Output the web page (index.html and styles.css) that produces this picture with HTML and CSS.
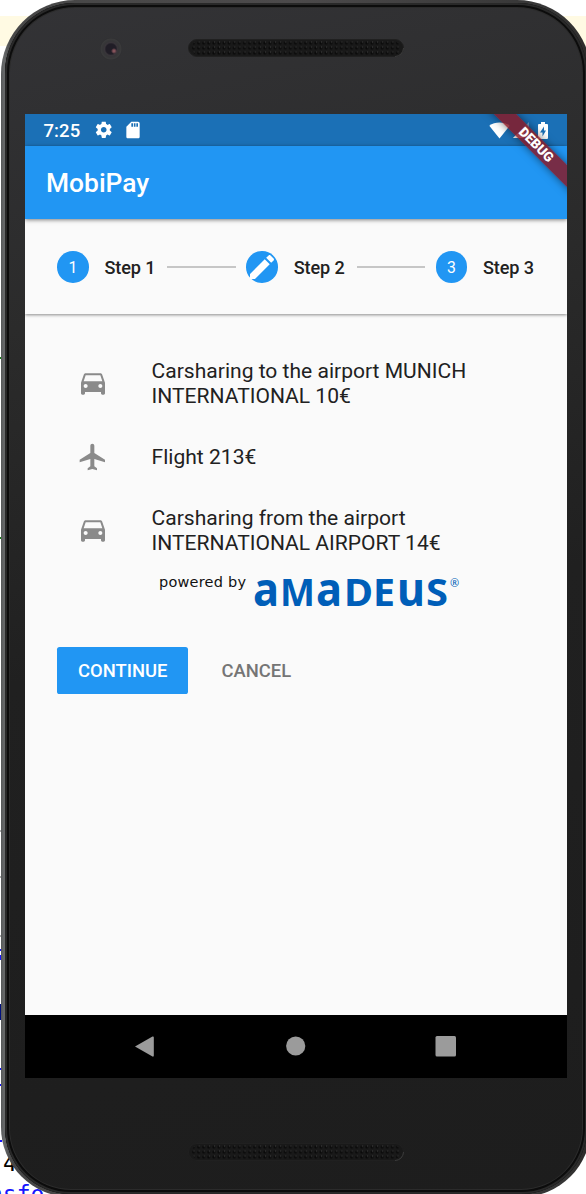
FILE: index.html
```html
<!DOCTYPE html>
<html lang="en">
<head>
<meta charset="utf-8">
<title>MobiPay</title>
<link rel="stylesheet" href="styles.css">
</head>
<body>
<div class="editor">
  <div class="current-line"></div>
  <i class="mark green m1"></i><i class="mark green m2"></i>
  <i class="mark gray m3"></i><i class="mark gray m4"></i><i class="mark gray m5"></i>
  <i class="mark blue m6"></i><i class="mark blue m7"></i><i class="mark navy m8"></i>
  <i class="mark blue m9"></i><i class="mark blue m10"></i><i class="mark blue m11"></i>
  <span class="code number">4</span>
  <span class="code link">nsfo</span>
</div>
<div class="phone">
  <div class="bezel">
    <div class="forehead">
      <div class="camera"></div>
      <svg class="speaker" viewBox="0 0 216 18"><use href="#grille"/></svg>
    </div>
    <main class="screen">
      <div class="status">
        <span class="time">7:25</span>
        <svg class="gear" viewBox="0 0 24 24"><path fill="#fff" d="M19.43 12.98c.04-.32.07-.64.07-.98s-.03-.66-.07-.98l2.11-1.65c.19-.15.24-.42.12-.64l-2-3.46c-.12-.22-.39-.3-.61-.22l-2.49 1c-.52-.4-1.08-.73-1.69-.98l-.38-2.65C14.46 2.18 14.25 2 14 2h-4c-.25 0-.46.18-.49.42l-.38 2.65c-.61.25-1.17.59-1.69.98l-2.49-1c-.23-.09-.49 0-.61.22l-2 3.46c-.13.22-.07.49.12.64l2.11 1.65c-.04.32-.07.65-.07.98s.03.66.07.98l-2.11 1.65c-.19.15-.24.42-.12.64l2 3.46c.12.22.39.3.61.22l2.49-1c.52.4 1.08.73 1.69.98l.38 2.65c.03.24.24.42.49.42h4c.25 0 .46-.18.49-.42l.38-2.65c.61-.25 1.17-.59 1.69-.98l2.49 1c.23.09.49 0 .61-.22l2-3.46c.12-.22.07-.49-.12-.64l-2.11-1.65zM12 15.5c-1.93 0-3.5-1.57-3.5-3.5s1.57-3.5 3.5-3.5 3.500 1.570 3.500 3.500-1.570 3.500-3.500 3.500z"/></svg>
        <svg class="sd" viewBox="0 0 24 24"><path fill="#fff" d="M18 2h-8L4.020 8 4 20c0 1.100.9 2 2 2h12c1.100 0 2-.9 2-2V4c0-1.100-.9-2-2-2zm-6 6h-2V4h2v4zm3 0h-2V4h2v4zm3 0h-2V4h2v4z"/></svg>
        <div class="signals">
          <svg class="wifi" viewBox="0 0 21 17"><path fill="#fff" d="M10.500 16.500 .3 3.800C6-.6 15-.6 20.700 3.800z"/></svg>
          <svg class="cell" viewBox="0 0 16 16"><path fill="#fff" fill-opacity=".35" d="M0 16 16 0v16z"/><path fill="#fff" d="M0 16 11 5v11z"/></svg>
          <svg class="battery" viewBox="0 0 10 17"><path fill="#fff" fill-rule="evenodd" d="M3 0h4v2h2q1 0 1 1v13q0 1-1 1H1q-1 0-1-1V3q0-1 1-1h2zm3 4.500L2 10.500h2.500v4L8 8.500H6z"/></svg>
        </div>
      </div>
      <header class="appbar">MobiPay</header>
      <section class="stepper">
        <div class="step"><span class="badge">1</span>Step 1</div>
        <div class="rule"></div>
        <div class="step"><span class="badge"><svg viewBox="0 0 24 24"><path fill="#fff" d="M3 17.250V21h3.750L17.810 9.940l-3.750-3.750L3 17.250zM20.710 7.040c.39-.39.39-1.020 0-1.410l-2.340-2.340c-.39-.39-1.020-.39-1.410 0l-1.830 1.830 3.750 3.750 1.830-1.830z"/></svg></span>Step 2</div>
        <div class="rule"></div>
        <div class="step"><span class="badge">3</span>Step 3</div>
      </section>
      <section class="content">
        <ul class="trip">
          <li class="leg tall"><svg class="icon" viewBox="0 0 24 24"><use href="#car"/></svg><span>Carsharing to the airport MUNICH<br>INTERNATIONAL 10€</span></li>
          <li class="leg"><svg class="icon plane" viewBox="0 0 24 24"><path d="M21 16v-2l-8-5V3.500c0-.83-.67-1.500-1.500-1.500S10 2.670 10 3.500V9l-8 5v2l8-2.500V19l-2 1.500V22l3.500-1 3.500 1v-1.500L13 19v-5.500l8 2.500z"/></svg><span>Flight 213€</span></li>
          <li class="leg tall"><svg class="icon" viewBox="0 0 24 24"><use href="#car"/></svg><span>Carsharing from the airport<br>INTERNATIONAL AIRPORT 14€</span></li>
        </ul>
        <svg class="powered" viewBox="0 0 304 40">
          <text class="by" x="0" y="17" textLength="87">powered by</text>
          <g class="amadeus">
            <text class="low" x="94" y="36" textLength="26" lengthAdjust="spacingAndGlyphs">a</text>
            <text class="cap" x="121" y="36" textLength="35" lengthAdjust="spacingAndGlyphs">M</text>
            <text class="low" x="157" y="36" textLength="26" lengthAdjust="spacingAndGlyphs">a</text>
            <text class="cap" x="185" y="36" textLength="29" lengthAdjust="spacingAndGlyphs">D</text>
            <text class="cap" x="214" y="36" textLength="22" lengthAdjust="spacingAndGlyphs">E</text>
            <text class="low" x="238" y="36" textLength="28" lengthAdjust="spacingAndGlyphs">u</text>
            <text class="cap" x="267" y="36" textLength="22" lengthAdjust="spacingAndGlyphs">S</text>
            <text class="reg" x="291" y="17">®</text>
          </g>
        </svg>
        <div class="actions">
          <button class="continue">CONTINUE</button>
          <button class="cancel">CANCEL</button>
        </div>
      </section>
      <nav class="navbar">
        <svg viewBox="0 0 542 63" fill="#9b9b9b"><path d="M110 31.500 127.500 21.500q1.300-.5 1.300 1v18q0 1.500-1.300 1z"/><circle cx="270.700" cy="31" r="9.600"/><rect x="410.500" y="21" width="20.500" height="20.500" rx="1.500"/></svg>
      </nav>
      <div class="debug">DEBUG</div>
    </main>
    <div class="chin"><svg class="speaker" viewBox="0 0 216 18"><use href="#grille"/></svg></div>
  </div>
</div>
<svg class="defs" width="0" height="0">
  <defs>
    <pattern id="holes" x="3" y="1.500" width="5.100" height="5" patternUnits="userSpaceOnUse"><circle cx="2.500" cy="2.500" r="1.500" fill="#080808"/><circle cx="3" cy="1.700" r=".6" fill="#444"/></pattern>
    <g id="grille"><rect x=".5" y=".5" width="215" height="17" rx="8.500" fill="#191919" stroke="#202020"/><rect x="4" y="1.500" width="208" height="15" rx="7" fill="url(#holes)"/><path d="M207 17.500a8.500 8.500 0 0 0 8.500-8.500" fill="none" stroke="#3c3c3c"/></g>
    <path id="car" d="M18.920 5.010C18.720 4.420 18.160 4 17.500 4h-11c-.66 0-1.210.42-1.420 1.010L3 11v8c0 .55.45 1 1 1h1c.55 0 1-.45 1-1v-1h12v1c0 .55.45 1 1 1h1c.55 0 1-.45 1-1v-8l-2.080-5.990zM6.500 15c-.83 0-1.500-.67-1.500-1.500S5.670 12 6.500 12s1.500.67 1.500 1.500S7.330 15 6.500 15zm11 0c-.83 0-1.500-.67-1.500-1.500s.67-1.500 1.500-1.500 1.500.67 1.500 1.500-.67 1.500-1.500 1.500zM5 10l1.500-4.500h11L19 10H5z"/>
  </defs>
</svg>
</body>
</html>
```
FILE: styles.css
```css
* { box-sizing: border-box; }
html, body { margin: 0; width: 586px; height: 1194px; overflow: hidden; background: #fff; }
body { position: relative; font-family: Roboto, "Liberation Sans", sans-serif; }
svg { display: block; }

/* code editor window behind the device */
.editor { position: absolute; inset: 0; overflow: hidden; }
.current-line { position: absolute; top: 16px; left: 0; right: 0; height: 30px; background: #fffae3; }
.mark { position: absolute; left: 0; width: 1px; height: 2px; }
.green { background: #148014; }
.gray { background: #aaa; }
.blue { background: #1616ff; }
.navy { background: #001080; }
.m1 { top: 357px; } .m2 { top: 537px; }
.m3 { top: 830px; } .m4 { top: 876px; } .m5 { top: 935px; }
.m6 { top: 949px; } .m7 { top: 955px; height: 5px; }
.m8 { top: 1004px; height: 16px; }
.m9 { top: 1068px; } .m10 { top: 1084px; } .m11 { top: 1140px; height: 2px; width: 2px; }
.code { position: absolute; font: 23px/26px "DejaVu Sans Mono", monospace; }
.number { left: 3px; top: 1150px; color: #000; }
.link { left: -11px; top: 1181px; color: #1616ff; }

.phone {
  position: relative;
  width: 590px;
  height: 1197px;
  margin-left: 1px;
  padding: 3px 4px;
  border-radius: 74px 74px 70px 70px;
  background: linear-gradient(90deg, #555758, #686a6b 3px, #474747 10px, #4c4a4b 50%, #353535 95%, #2c2a29);
}
.bezel {
  height: 1191px;
  padding: 0 15px 0 20px;
  border-radius: 70px 70px 66px 66px;
  background: linear-gradient(168deg, #333336 0, #2b2b2b 25%, #202020 52%, #1d1d1d);
  box-shadow: inset 0 0 0 2px #292929, inset 0 0 0 4px #0c0c0c, inset 0 0 0 5px #2b2b2b;
}
.forehead { display: flex; height: 111px; padding-top: 36px; }
.camera {
  flex: none;
  width: 22px; height: 22px;
  margin: -1px 78px 0 75px;
  border-radius: 50%;
  background: radial-gradient(circle at 14px 13px, #85535a 0 1px, transparent 3px), radial-gradient(circle, #201d26 0 5px, #39353a 6.500px, #353537 8px, #3a3a3b 10px, #303032 11px);
}
.speaker { flex: none; width: 216px; height: 18px; }
.forehead .speaker { margin-left: -12px; }
.chin { padding: 65px 0 0 163px; }

.screen {
  position: relative;
  display: flex;
  flex-direction: column;
  width: 542px;
  height: 964px;
  overflow: hidden;
  background: #fafafa;
  color: #212121;
}
.status { display: flex; align-items: center; height: 32px; padding: 0 19px 0 18.500px; background: #1b70b6; color: #fff; z-index: 2; }
.time { width: 50.500px; padding-top: 1px; font-size: 18.500px; font-weight: 500; letter-spacing: .1px; }
.gear { width: 19.500px; height: 19.500px; margin-right: 9px; }
.sd { width: 20px; height: 20px; }
.signals { display: flex; align-items: center; margin-left: auto; }
.wifi { width: 21px; height: 17px; margin-right: 3px; }
.cell { width: 16px; height: 16px; margin-right: 9px; }
.battery { width: 10px; height: 17px; }
.appbar { z-index: 2; height: 73px; padding-left: 21px; background: #2196f3; color: #fff; font-size: 26.400px; font-weight: 500; line-height: 74px; box-shadow: 0 1px 4px rgba(0,0,0,.5); }
.stepper { z-index: 1; display: flex; align-items: center; height: 95px; padding: 1px 33px 0 32px; background: #fafafa; box-shadow: 0 1px 3px rgba(0,0,0,.45); }
.step { display: flex; align-items: center; gap: 15.800px; font-size: 18.100px; font-weight: 500; letter-spacing: -.1px; white-space: nowrap; }
.badge { display: flex; align-items: center; justify-content: center; width: 31.600px; height: 31.600px; border-radius: 50%; background: #2196f3; color: #fff; font-size: 15.800px; font-weight: 400; }
.badge svg { width: 32px; height: 32px; flex: none; }
.rule { flex: 1; height: 2px; margin: 0 10.500px 0 12px; background: #c6c6c6; }
.content { flex: 1; padding: 32px; }
.trip { margin: 0; padding: 0; list-style: none; }
.leg { display: flex; align-items: center; gap: 42.600px; height: 73px; padding-left: 20px; font-size: 21.050px; line-height: 25px; }
.leg.tall { height: 74px; }
.icon { flex: none; width: 32px; height: 32px; fill: #8a8a8a; }
.tall .icon { margin-top: 2px; }
.powered { width: 304px; height: 40px; margin: 3px 0 0 102px; overflow: visible; }
.by { font: 14.500px "DejaVu Sans", sans-serif; fill: #111; }
.amadeus { font-family: "Noto Sans", sans-serif; font-weight: 700; fill: #005eb8; }
.low { font-size: 47px; }
.cap { font-size: 37.500px; }
.reg { font-size: 11px; font-weight: 400; }
.actions { display: flex; margin-top: 37px; }
.actions button { height: 47px; border: 0; padding: 0 21px; font: 500 18.400px Roboto, sans-serif; border-radius: 2.600px; }
.actions .continue { width: 131px; background: #2196f3; color: #fff; }
.actions .cancel { margin-left: 12.500px; background: none; color: #757575; }
.navbar { height: 63px; background: #000; }
.debug {
  position: absolute; z-index: 3;
  left: 450px; top: 23px;
  width: 122px; height: 16px;
  transform: rotate(45deg);
  background: rgba(137,24,36,.83);
  box-shadow: 0 0 8px rgba(0,0,0,.5);
  color: #fff;
  font-size: 13.400px; font-weight: 900; line-height: 16px; text-align: center;
}
```
